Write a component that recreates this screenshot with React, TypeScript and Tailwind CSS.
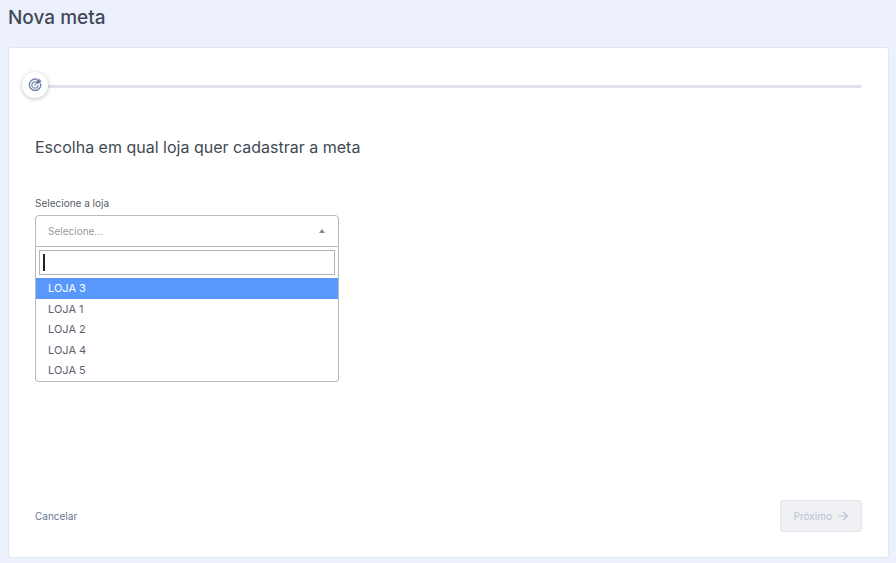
import { useState } from "react";

const stores = ["LOJA 3", "LOJA 1", "LOJA 2", "LOJA 4", "LOJA 5"];

function TargetIcon() {
  return (
    <svg viewBox="0 0 14 14" className="size-[14px]" fill="none" stroke="#7a89aa" aria-hidden="true">
      <path d="M8.6 1.3A5.7 5.7 0 1 0 12.7 6" strokeWidth="1.5" strokeLinecap="round" />
      <path d="M7.8 4.1A3.1 3.1 0 1 0 10 7.4" strokeWidth="1.2" strokeLinecap="round" />
      <path d="M6.8 7.2 9.6 4.4" strokeWidth="1.2" strokeLinecap="round" />
      <path d="M8.8 2.8 10.8 0.9 11.5 2.4 13.1 3 11.2 5.2H8.8Z" fill="#6b7b9f" stroke="#6b7b9f" strokeWidth="0.8" />
    </svg>
  );
}

function Stepper() {
  return (
    <div className="-ml-[13px] flex items-center" role="img" aria-label="Etapa 1">
      <div className="z-10 flex size-[26px] items-center justify-center rounded-full bg-white shadow-[0_1px_4px_rgba(40,50,80,0.3)]">
        <TargetIcon />
      </div>
      <div className="mt-[3px] h-[3px] flex-1 rounded-r-full bg-[#dfe2eb]" />
    </div>
  );
}

function StoreSelect() {
  const [query, setQuery] = useState("");
  const [open, setOpen] = useState(true);
  const [active, setActive] = useState("LOJA 3");
  const [chosen, setChosen] = useState("");
  const shown = stores.filter((s) => s.toLowerCase().includes(query.toLowerCase()));

  return (
    <div className="relative w-[304px]">
      <button
        id="store"
        type="button"
        aria-haspopup="listbox"
        aria-expanded={open}
        onClick={() => setOpen(!open)}
        className="flex h-8 w-full items-center justify-between rounded-t border border-[#b8b9bb] pr-[13px] pl-3 text-[10px] text-[#9b9b9d]"
      >
        {chosen || "Selecione..."}
        <svg viewBox="0 0 6 4" className="h-1 w-[6px]" fill="#888888" aria-hidden="true">
          <path d="M3 0 6 4H0Z" />
        </svg>
      </button>
      {open && (
        <div className="absolute inset-x-0 top-full rounded-b border border-t-0 border-[#b8b9bb] bg-white">
          <div className="relative p-[3px]">
            <input
              aria-label="Buscar loja"
              value={query}
              onChange={(e) => setQuery(e.target.value)}
              className="block h-[25px] w-full border border-[#b5b5b5] px-1 text-[11px] caret-transparent outline-none"
            />
            {!query && <span className="absolute top-[7px] left-[7px] h-[17px] w-[2px] bg-[#222222]" />}
          </div>
          <ul role="listbox" aria-label="Lojas" className="grid h-[103px] auto-rows-fr overflow-hidden rounded-b">
            {shown.map((store) => (
              <li
                key={store}
                role="option"
                aria-selected={store === active}
                onMouseEnter={() => setActive(store)}
                onClick={() => {
                  setChosen(store);
                  setOpen(false);
                }}
                className={
                  store === active
                    ? "flex items-center bg-[#5897fb] px-3 text-[11px] text-white"
                    : "flex items-center px-3 text-[11px] text-[#5c6270]"
                }
              >
                {store}
              </li>
            ))}
          </ul>
        </div>
      )}
    </div>
  );
}

export default function App() {
  return (
    <main className="min-h-screen bg-[#ecf1fd] pr-[7px] pb-[5px] pl-2 font-[Inter,'Liberation_Sans',sans-serif]">
      <h1 className="pt-[5px] pb-4 text-[19px] leading-[26px] font-medium text-[#414956]">Nova meta</h1>
      <form
        onSubmit={(e) => e.preventDefault()}
        className="flex min-h-[511px] flex-col rounded-[3px] border border-[#e1e5ef] bg-white px-[26px] pt-6 pb-[25px]"
      >
        <Stepper />
        <h2 className="mt-[37px] text-base leading-6 text-[#414956]">
          Escolha em qual loja quer cadastrar a meta
        </h2>
        <label htmlFor="store" className="mt-9 mb-1 text-[10px] leading-4 text-[#555c69]">
          Selecione a loja
        </label>
        <StoreSelect />
        <div className="mt-auto flex items-center justify-between">
          <button type="button" className="text-[10px] leading-4 text-[#69758f]">
            Cancelar
          </button>
          <button
            type="submit"
            disabled
            className="flex h-8 items-center gap-[6px] rounded-[3px] border border-[#e2e5ec] bg-[#eff0f4] px-[13px] text-[10px] text-[#b9c2d1]"
          >
            Próximo
            <svg viewBox="0 0 10 10" className="size-[10px]" fill="none" stroke="currentColor" strokeWidth="1.2" aria-hidden="true">
              <path d="M0.5 5H9.3M5.3 1 9.3 5 5.3 9" />
            </svg>
          </button>
        </div>
      </form>
    </main>
  );
}
